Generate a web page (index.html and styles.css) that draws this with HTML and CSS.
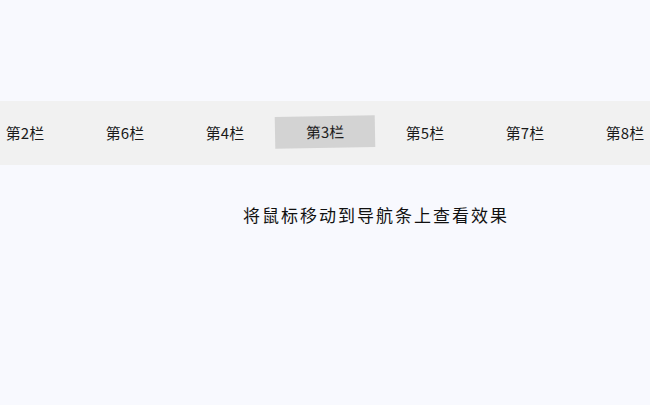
FILE: index.html
```html
<!DOCTYPE html>
<html lang="zh-CN">
<head>
<meta charset="utf-8">
<title>导航条</title>
<link rel="stylesheet" href="styles.css">
</head>
<body>
<nav class="nav">
  <ul class="nav-list">
    <li class="nav-item"><a class="nav-link" href="#">第2栏</a></li>
    <li class="nav-item"><a class="nav-link" href="#">第6栏</a></li>
    <li class="nav-item"><a class="nav-link" href="#">第4栏</a></li>
    <li class="nav-item"><a class="nav-link active" href="#">第3栏</a></li>
    <li class="nav-item"><a class="nav-link" href="#">第5栏</a></li>
    <li class="nav-item"><a class="nav-link" href="#">第7栏</a></li>
    <li class="nav-item"><a class="nav-link" href="#">第8栏</a></li>
  </ul>
</nav>
<p class="hint">将鼠标移动到导航条上查看效果</p>
</body>
</html>
```
FILE: styles.css
```css
html, body {
  margin: 0;
  padding: 0;
  background: #f8f9fe;
  font-family: "Noto Sans CJK SC", "Liberation Sans", sans-serif;
  color: #222;
  overflow: hidden;
}
.nav {
  margin-top: 101px;
  height: 64px;
  background: #f1f1f1;
  overflow: hidden;
}
.nav-list {
  list-style: none;
  margin: 0 0 0 -25px;
  padding: 0;
  display: flex;
  height: 64px;
}
.nav-item {
  flex: 0 0 100px;
  display: flex;
  align-items: center;
}
.nav-link {
  display: block;
  width: 100px;
  height: 32px;
  line-height: 32px;
  text-align: center;
  font-size: 15px;
  color: #1a1a1a;
  text-decoration: none;
}
.nav-link.active {
  background: #d3d3d3;
  transform: translateY(-1px) rotate(-1deg);
}
.hint {
  margin: 38px 0 0 243px;
  font-size: 17px;
  letter-spacing: 2px;
  line-height: 24px;
  color: #111;
}
```
